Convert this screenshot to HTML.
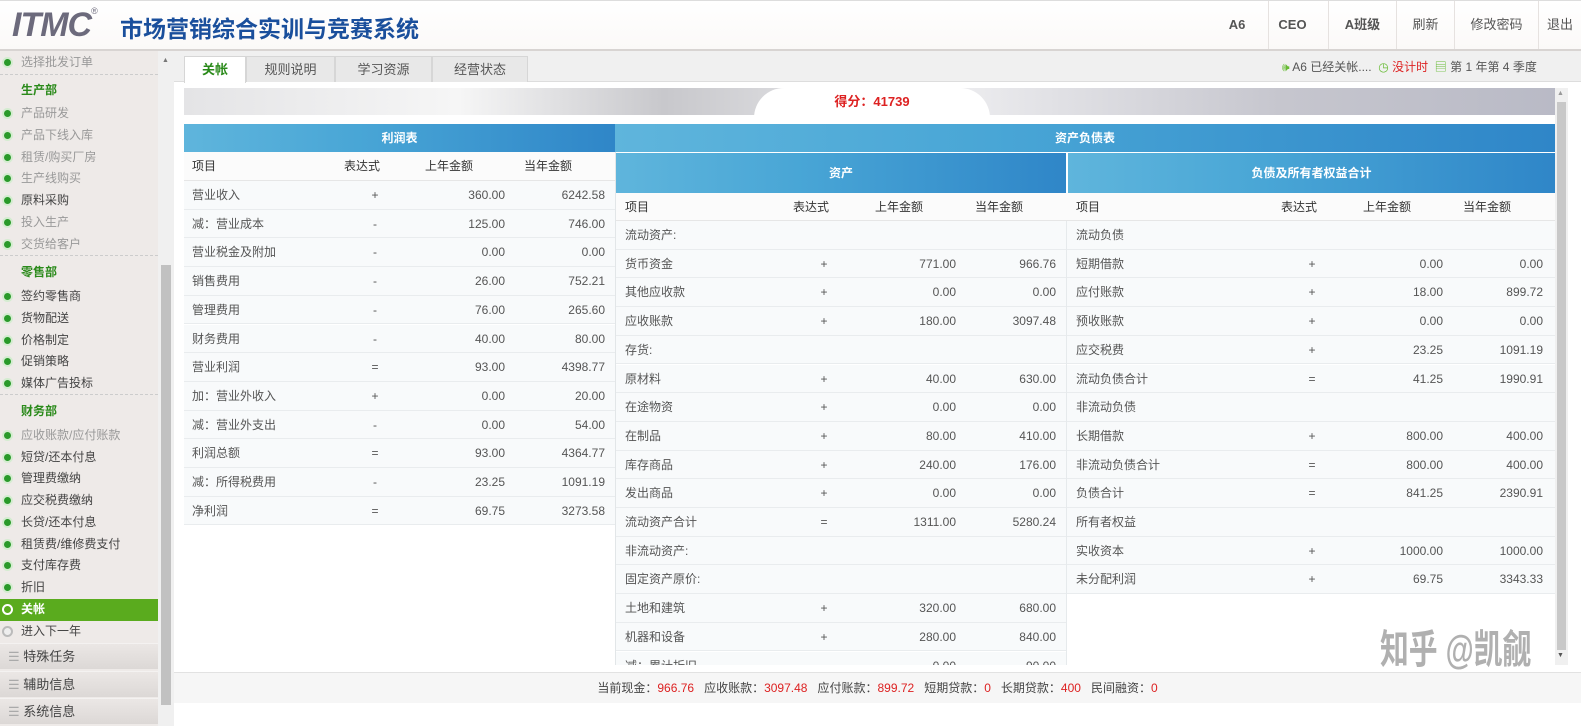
<!DOCTYPE html>
<html><head><meta charset="utf-8">
<style>
*{margin:0;padding:0;box-sizing:border-box}
body{width:1581px;height:726px;overflow:hidden;background:#fff;font-family:"Liberation Sans","Noto Sans CJK SC",sans-serif;font-size:12px;color:#444;position:relative}
.abs{position:absolute}
#hdr{left:0;top:0;width:1581px;height:51px;background:linear-gradient(#fff,#fbf9f8);border-top:1px solid #ddd;border-bottom:2px solid #d8d4d2}
.logo{left:12px;top:6px;font:italic bold 34px "Liberation Sans",sans-serif;color:#6c6a7c;letter-spacing:-1px}
.title{left:120px;top:10px;font-size:23px;font-weight:bold;color:#1a4f9c;font-family:"Liberation Sans","Noto Sans CJK SC",sans-serif}
.nav{top:1px;height:48px;line-height:48px;text-align:center;border-left:1px solid #e6e2e0;color:#555;font-size:13px}
#side{left:0;top:51px;width:158px;height:675px;background:#eeeae8}
.si{position:absolute;left:0;width:158px;height:21px;line-height:21px;padding-left:21px;color:#999;font-size:12px}
.si.g{color:#444}
.si .d{position:absolute;left:2px;top:5px;width:11px;height:11px;border-radius:50%;background:#2a9a2a;border:2px solid #d4ecd0}
.sec{position:absolute;left:21px;font-weight:bold;color:#2a8a1a;font-size:12px}
.bar{position:absolute;left:0;width:158px;height:26px;line-height:26px;padding-left:8px;background:linear-gradient(#ebe7e5,#dcd8d6);color:#444;font-size:13px;border-top:1px solid #f4f2f1}
#sbar{left:158px;top:51px;width:16px;height:675px;background:#f0f0f0}
#tabs{left:174px;top:51px;width:1407px;height:31px;background:#f0f0f0;border-bottom:1px solid #ddd}
.tab{position:absolute;top:5px;height:26px;line-height:26px;text-align:center;background:#e8e8e8;border:1px solid #d6d6d6;border-bottom:none;font-size:13px;color:#555}
.row{position:absolute;height:28.7px;line-height:28px;border-bottom:1px solid #e9ecee;background:#f8fafb;font-size:12px;color:#555}
.row span{position:absolute;top:0}
.hd{background:linear-gradient(90deg,#5fb5dc,#49a6d6 40%,#2f86c8);color:#fff;font-weight:bold;text-align:center;font-size:12px}
.r{color:#d22}
</style></head><body>
<div id="hdr" class="abs"></div>
<div class="abs logo">ITMC<span style="font-size:9px;vertical-align:top;font-style:normal;font-weight:normal">®</span></div>
<div class="abs title">市场营销综合实训与竞赛系统</div>
<div class="abs nav" style="left:1213px;width:48px;font-weight:bold;border-left:none">A6</div>
<div class="abs nav" style="left:1268px;width:48px;font-weight:bold">CEO</div>
<div class="abs nav" style="left:1328px;width:68px;font-weight:bold">A班级</div>
<div class="abs nav" style="left:1396px;width:58px">刷新</div>
<div class="abs nav" style="left:1454px;width:84px">修改密码</div>
<div class="abs nav" style="left:1538px;width:43px">退出</div>

<div id="side" class="abs">
<div class="si" style="top:1px"><i class="d"></i>选择批发订单</div>
<div style="position:absolute;left:0;top:23px;width:158px;border-top:1px dashed #ccc"></div>
<div class="sec" style="top:30px">生产部</div>
<div class="si" style="top:52px"><i class="d"></i>产品研发</div>
<div class="si" style="top:74px"><i class="d"></i>产品下线入库</div>
<div class="si" style="top:96px"><i class="d"></i>租赁/购买厂房</div>
<div class="si" style="top:117px"><i class="d"></i>生产线购买</div>
<div class="si g" style="top:139px"><i class="d"></i>原料采购</div>
<div class="si" style="top:161px"><i class="d"></i>投入生产</div>
<div class="si" style="top:183px"><i class="d"></i>交货给客户</div>
<div style="position:absolute;left:0;top:204px;width:158px;border-top:1px dashed #ccc"></div>
<div class="sec" style="top:212px">零售部</div>
<div class="si g" style="top:235px"><i class="d"></i>签约零售商</div>
<div class="si g" style="top:257px"><i class="d"></i>货物配送</div>
<div class="si g" style="top:279px"><i class="d"></i>价格制定</div>
<div class="si g" style="top:300px"><i class="d"></i>促销策略</div>
<div class="si g" style="top:322px"><i class="d"></i>媒体广告投标</div>
<div style="position:absolute;left:0;top:343px;width:158px;border-top:1px dashed #ccc"></div>
<div class="sec" style="top:351px">财务部</div>
<div class="si" style="top:374px"><i class="d"></i>应收账款/应付账款</div>
<div class="si g" style="top:396px"><i class="d"></i>短贷/还本付息</div>
<div class="si g" style="top:417px"><i class="d"></i>管理费缴纳</div>
<div class="si g" style="top:439px"><i class="d"></i>应交税费缴纳</div>
<div class="si g" style="top:461px"><i class="d"></i>长贷/还本付息</div>
<div class="si g" style="top:483px"><i class="d"></i>租赁费/维修费支付</div>
<div class="si g" style="top:504px"><i class="d"></i>支付库存费</div>
<div class="si g" style="top:526px"><i class="d"></i>折旧</div>
<div class="si" style="top:548px;height:22px;background:#5aab1e;color:#fff;font-weight:bold"><i class="d" style="background:#5aab1e;border-color:#fff"></i>关帐</div>
<div class="si g" style="top:570px"><i class="d" style="background:#eee;border-color:#bbb"></i>进入下一年</div>
<div class="bar" style="top:592px"><span style="color:#aaa">☰</span> 特殊任务</div>
<div class="bar" style="top:620px"><span style="color:#aaa">☰</span> 辅助信息</div>
<div class="bar" style="top:647px"><span style="color:#aaa">☰</span> 系统信息</div>
</div>
<div id="sbar" class="abs"><div class="abs" style="left:3px;top:214px;width:10px;height:440px;background:#c1c1c1"></div><div class="abs" style="left:4px;top:6px;font-size:7px;color:#777">▲</div></div>

<div id="tabs" class="abs">
<div class="tab" style="left:10px;width:62px;background:#fff;color:#2a8a1a;font-weight:bold;height:27px">关帐</div>
<div class="tab" style="left:72px;width:89px">规则说明</div>
<div class="tab" style="left:161px;width:97px">学习资源</div>
<div class="tab" style="left:258px;width:96px">经营状态</div>
<div class="abs" style="left:1108px;top:7px;font-size:12px;color:#555;white-space:nowrap"><span style="color:#6b3">🕪</span> A6 已经关帐....&nbsp;&nbsp;<span style="color:#6b3">◷</span> <span class="r">没计时</span>&nbsp;&nbsp;<span style="color:#6b3">▤</span> 第 1 年第 4 季度</div>
</div>

<div class="abs" style="left:184px;top:88px;width:1371px;height:27px;background:linear-gradient(90deg,#e4e4e6,#f6f6f6 20%,#c8c8cc 35%,#efeff1 55%,#c6c6ce 80%,#b9bac6)"></div>
<div class="abs" style="left:754px;top:88px;width:236px;height:31px;background:#fff;border-radius:30px 30px 0 0;text-align:center;line-height:28px;color:#d22;font-weight:bold;font-size:13px">得分：41739</div>

<div class="abs" style="left:184px;top:124px;width:1371px;height:541px;overflow:hidden;background:#fff">
<div class="abs hd" style="left:0;top:0;width:431px;height:28px;line-height:28px">利润表</div>
<div class="abs hd" style="left:431px;top:0;width:940px;height:28px;line-height:28px">资产负债表</div>
<div class="abs" style="left:0;top:28px;width:431px;height:29px;line-height:29px;background:#fbfbfb;border-bottom:1px solid #e6e6e6;color:#333"><span class="abs" style="left:8px">项目</span><span class="abs" style="left:160px">表达式</span><span class="abs" style="left:241px">上年金额</span><span class="abs" style="left:340px">当年金额</span></div>
<div class="abs hd" style="left:432px;top:29px;width:450px;height:40px;line-height:40px">资产</div>
<div class="abs hd" style="left:884px;top:29px;width:487px;height:40px;line-height:40px">负债及所有者权益合计</div>
<div class="abs" style="left:431px;top:69px;width:940px;height:28px;line-height:28px;background:#fbfbfb;border-bottom:1px solid #e6e6e6;color:#333"><span class="abs" style="left:10px">项目</span><span class="abs" style="left:178px">表达式</span><span class="abs" style="left:260px">上年金额</span><span class="abs" style="left:360px">当年金额</span><span class="abs" style="left:461px">项目</span><span class="abs" style="left:666px">表达式</span><span class="abs" style="left:748px">上年金额</span><span class="abs" style="left:848px">当年金额</span></div>
<div class="abs" style="left:431px;top:28px;width:1px;height:520px;background:#e2e6e8"></div>
<div class="abs" style="left:882px;top:97px;width:1px;height:450px;background:#e6eaec"></div>
<div id="L"></div><div id="R"></div>
</div>
<div class="abs" style="left:1555px;top:88px;width:13px;height:577px;background:#f0f0f0"><div class="abs" style="left:2px;top:14px;width:9px;height:548px;background:#c8c8c8"></div><div class="abs" style="left:2px;top:2px;font-size:7px;color:#999">▲</div><div class="abs" style="left:2px;top:564px;font-size:7px;color:#555">▼</div></div>

<div class="abs" style="left:1380px;top:628px;font-size:40px;font-weight:bold;color:rgba(150,150,150,0.75);white-space:nowrap;transform:scaleX(0.72);transform-origin:0 0;line-height:44px">知乎 @凯觎</div>

<div class="abs" style="left:174px;top:672px;width:1407px;height:31px;background:#f6f6f6;border-top:1px solid #e2e2e2;text-align:center;line-height:31px;font-size:12px;color:#444">当前现金：<span class="r">966.76</span>&nbsp;&nbsp; 应收账款：<span class="r">3097.48</span>&nbsp;&nbsp; 应付账款：<span class="r">899.72</span>&nbsp;&nbsp; 短期贷款：<span class="r">0</span>&nbsp;&nbsp; 长期贷款：<span class="r">400</span>&nbsp;&nbsp; 民间融资：<span class="r">0</span></div>

<script>
function rows(id,left,width,top,data,cols){var h='';data.forEach(function(d,i){h+='<div class="row" style="left:'+left+'px;width:'+width+'px;top:'+(top+i*28.7)+'px">';
h+='<span style="left:'+cols[0]+'px">'+d[0]+'</span>';
if(d[1])h+='<span style="left:'+(cols[1]-20)+'px;width:40px;text-align:center">'+d[1]+'</span>';
if(d[2])h+='<span style="right:'+cols[2]+'px">'+d[2]+'</span>';
if(d[3])h+='<span style="right:'+cols[3]+'px">'+d[3]+'</span>';
h+='</div>';});document.getElementById(id).outerHTML=h;}
rows('L',0,431,57,[["营业收入","+","360.00","6242.58"],["减：营业成本","-","125.00","746.00"],["营业税金及附加","-","0.00","0.00"],["销售费用","-","26.00","752.21"],["管理费用","-","76.00","265.60"],["财务费用","-","40.00","80.00"],["营业利润","=","93.00","4398.77"],["加：营业外收入","+","0.00","20.00"],["减：营业外支出","-","0.00","54.00"],["利润总额","=","93.00","4364.77"],["减：所得税费用","-","23.25","1091.19"],["净利润","=","69.75","3273.58"]],[8,191,110,10]);
var A=[["流动资产:"],["货币资金","+","771.00","966.76"],["其他应收款","+","0.00","0.00"],["应收账款","+","180.00","3097.48"],["存货:"],["原材料","+","40.00","630.00"],["在途物资","+","0.00","0.00"],["在制品","+","80.00","410.00"],["库存商品","+","240.00","176.00"],["发出商品","+","0.00","0.00"],["流动资产合计","=","1311.00","5280.24"],["非流动资产:"],["固定资产原价:"],["土地和建筑","+","320.00","680.00"],["机器和设备","+","280.00","840.00"],["减：累计折旧","-","0.00","90.00"]];
var B=[["流动负债"],["短期借款","+","0.00","0.00"],["应付账款","+","18.00","899.72"],["预收账款","+","0.00","0.00"],["应交税费","+","23.25","1091.19"],["流动负债合计","=","41.25","1990.91"],["非流动负债"],["长期借款","+","800.00","400.00"],["非流动负债合计","=","800.00","400.00"],["负债合计","=","841.25","2390.91"],["所有者权益"],["实收资本","+","1000.00","1000.00"],["未分配利润","+","69.75","3343.33"]];
var h='';
A.forEach(function(d,i){h+='<div class="row" style="left:432px;width:450px;top:'+(97+i*28.7)+'px"><span style="left:9px">'+d[0]+'</span>'+(d[1]?'<span style="left:188px;width:40px;text-align:center">'+d[1]+'</span><span style="right:110px">'+d[2]+'</span><span style="right:10px">'+d[3]+'</span>':'')+'</div>';});
B.forEach(function(d,i){h+='<div class="row" style="left:883px;width:488px;top:'+(97+i*28.7)+'px"><span style="left:9px">'+d[0]+'</span>'+(d[1]?'<span style="left:225px;width:40px;text-align:center">'+d[1]+'</span><span style="right:112px">'+d[2]+'</span><span style="right:12px">'+d[3]+'</span>':'')+'</div>';});
document.getElementById('R').outerHTML=h;
</script>
</body></html>
